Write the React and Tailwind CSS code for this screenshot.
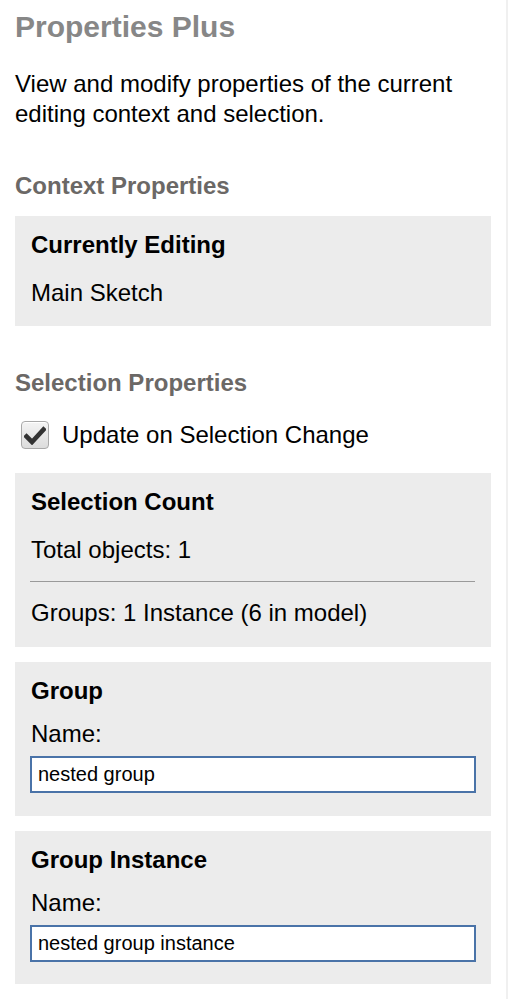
import React, { useState } from "react";

const Card = ({ className = "", children }) => (
  <div className={"bg-[#ececec] px-4 " + className}>{children}</div>
);

const CardTitle = ({ children }) => (
  <h3 className="text-[24px] leading-[28px] font-bold text-black">{children}</h3>
);

const NameField = ({ value, onChange }) => (
  <div>
    <div className="mt-[15px] text-[24px] leading-[28px]">Name:</div>
    <input
      type="text"
      value={value}
      onChange={(e) => onChange(e.target.value)}
      className="mt-2 -ml-px block h-[37px] w-[446px] border-2 border-[#4a73a8] bg-white pl-[6px] text-[20px] text-black outline-none"
    />
  </div>
);

const App = () => {
  const [autoUpdate, setAutoUpdate] = useState(true);
  const [groupName, setGroupName] = useState("nested group");
  const [instanceName, setInstanceName] = useState("nested group instance");

  return (
    <div className="flex min-h-screen bg-white font-['Liberation_Sans',Arial,sans-serif] text-black">
      <div className="w-[506px] shrink-0 px-[15px] pt-[9px] pb-[15px]">
        <h1 className="text-[30px] leading-[36px] font-bold text-[#878787]">Properties Plus</h1>
        <p className="mt-[24px] text-[24px] leading-[30px]">
          View and modify properties of the current editing context and selection.
        </p>

        <h2 className="mt-[43px] text-[24px] leading-[28px] font-bold text-[#6b6866]">
          Context Properties
        </h2>
        <Card className="mt-4 pt-[15px] pb-[19px]">
          <CardTitle>Currently Editing</CardTitle>
          <div className="mt-5 text-[24px] leading-[28px]">Main Sketch</div>
        </Card>

        <h2 className="mt-[43px] text-[24px] leading-[28px] font-bold text-[#6b6866]">
          Selection Properties
        </h2>
        <label className="mt-6 flex h-[28px] cursor-pointer items-center">
          <span
            onClick={() => setAutoUpdate(!autoUpdate)}
            className="ml-[6px] flex h-[28px] w-[28px] items-center justify-center rounded-[4px] border border-[#a9a9a9] bg-gradient-to-b from-[#f4f4f4] to-[#dcdcdc] shadow-[inset_0_1px_0_#fff]"
          >
            {autoUpdate && (
              <svg width="22" height="19" viewBox="0 0 22 19">
                <path
                  d="M2.5 10.5 L8 16 L19.5 3.5"
                  fill="none"
                  stroke="#333"
                  strokeWidth="4.6"
                  strokeLinecap="square"
                  strokeLinejoin="miter"
                />
              </svg>
            )}
          </span>
          <span className="ml-[13px] text-[24px] leading-[28px]">Update on Selection Change</span>
        </label>

        <Card className="mt-6 pt-[15px] pb-5">
          <CardTitle>Selection Count</CardTitle>
          <div className="mt-5 text-[24px] leading-[28px]">Total objects: 1</div>
          <hr className="mt-[17px] -ml-px border-0 border-t border-[#9a9a9a]" />
          <div className="mt-[17px] text-[24px] leading-[28px]">Groups: 1 Instance (6 in model)</div>
        </Card>

        <Card className="mt-[15px] pt-[15px] pb-[23px]">
          <CardTitle>Group</CardTitle>
          <NameField value={groupName} onChange={setGroupName} />
        </Card>

        <Card className="mt-[15px] pt-[15px] pb-[22px]">
          <CardTitle>Group Instance</CardTitle>
          <NameField value={instanceName} onChange={setInstanceName} />
        </Card>
      </div>
      <div className="flex-1 bg-[#f0f0f0]" />
    </div>
  );
};

export default App;
